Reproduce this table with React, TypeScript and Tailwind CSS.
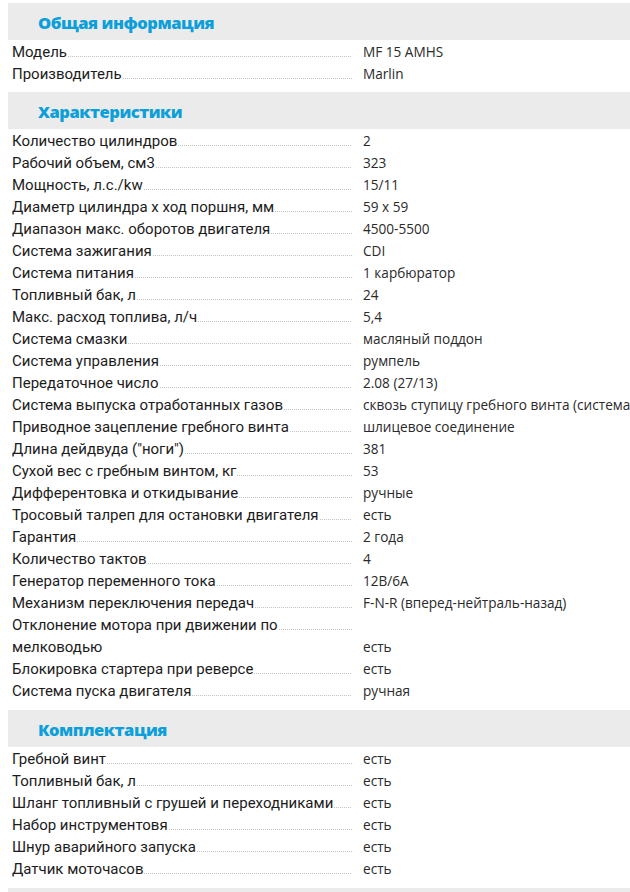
import React from "react";

type Row = [string, string];

const general: Row[] = [
  ["Модель", "MF 15 AMHS"],
  ["Производитель", "Marlin"],
];

const specsA: Row[] = [
  ["Количество цилиндров", "2"],
  ["Рабочий объем, см3", "323"],
  ["Мощность, л.с./kw", "15/11"],
  ["Диаметр цилиндра x ход поршня, мм", "59 x 59"],
  ["Диапазон макс. оборотов двигателя", "4500-5500"],
  ["Система зажигания", "CDI"],
  ["Система питания", "1 карбюратор"],
  ["Топливный бак, л", "24"],
  ["Макс. расход топлива, л/ч", "5,4"],
  ["Система смазки", "масляный поддон"],
  ["Система управления", "румпель"],
  ["Передаточное число", "2.08 (27/13)"],
  ["Система выпуска отработанных газов", "сквозь ступицу гребного винта (система"],
  ["Приводное зацепление гребного винта", "шлицевое соединение"],
  ["Длина дейдвуда (\"ноги\")", "381"],
  ["Сухой вес с гребным винтом, кг", "53"],
  ["Дифферентовка и откидывание", "ручные"],
  ["Тросовый талреп для остановки двигателя", "есть"],
  ["Гарантия", "2 года"],
  ["Количество тактов", "4"],
  ["Генератор переменного тока", "12В/6А"],
  ["Механизм переключения передач", "F-N-R (вперед-нейтраль-назад)"],
];

const specsB: Row[] = [
  ["Блокировка стартера при реверсе", "есть"],
  ["Система пуска двигателя", "ручная"],
];

const kit: Row[] = [
  ["Гребной винт", "есть"],
  ["Топливный бак, л", "есть"],
  ["Шланг топливный с грушей и переходниками", "есть"],
  ["Набор инструментовя", "есть"],
  ["Шнур аварийного запуска", "есть"],
  ["Датчик моточасов", "есть"],
];

const labelFont = "font-['Roboto','Liberation_Sans',sans-serif] text-[15px] text-[#1c1c1c]";
const valueFont = "font-['Open_Sans','Liberation_Sans',sans-serif] text-[13.6px] text-[#2a2a2a]";

function Dots() {
  return (
    <div className="ml-[1px] h-px min-w-[8px] flex-1 bg-[linear-gradient(to_right,#c2c2c2_1px,transparent_1px)] bg-[length:2px_1px] bg-repeat-x" />
  );
}

function SpecRow({ label, value, dots = true }: { label: string; value: string; dots?: boolean }) {
  return (
    <div className="flex h-[22px] items-center pl-[4px]">
      <div className={`flex w-[340px] shrink-0 items-baseline leading-[22px] ${labelFont}`}>
        <span className="whitespace-nowrap">{label}</span>
        {dots ? <Dots /> : null}
      </div>
      <div className={`ml-[11px] whitespace-nowrap leading-[22px] ${valueFont}`}>{value}</div>
    </div>
  );
}

function Header({ title }: { title: string }) {
  return (
    <div className="flex h-[37px] items-center bg-[#ebebeb] pl-[30px] pt-[3px]">
      <h2 className="font-['Open_Sans','Liberation_Sans',sans-serif] text-[16.5px] font-extrabold tracking-[-0.45px] text-[#0c9fd9]">
        {title}
      </h2>
    </div>
  );
}

export default function App() {
  return (
    <div className="h-[892px] w-[630px] overflow-hidden bg-white pl-[8px] pt-[3px]">
      <Header title="Общая информация" />
      <div className="pt-[1px]">
        {general.map(([l, v]) => (
          <SpecRow key={l} label={l} value={v} />
        ))}
      </div>
      <div className="h-[7px]" />
      <Header title="Характеристики" />
      <div className="pt-[1px]">
        {specsA.map(([l, v]) => (
          <SpecRow key={l} label={l} value={v} />
        ))}
        <SpecRow label="Отклонение мотора при движении по" value="" />
        <SpecRow label="мелководью" value="есть" dots={false} />
        {specsB.map(([l, v]) => (
          <SpecRow key={l} label={l} value={v} />
        ))}
      </div>
      <div className="h-[8px]" />
      <Header title="Комплектация" />
      <div className="pt-[1px]">
        {kit.map(([l, v]) => (
          <SpecRow key={l} label={l} value={v} />
        ))}
      </div>
      <div className="mt-[8px] h-[10px] bg-[#ebebeb]" />
    </div>
  );
}
